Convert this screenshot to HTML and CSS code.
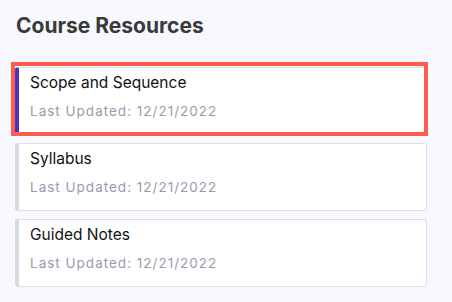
FILE: index.html
```html
<!DOCTYPE html>
<html lang="en">
<head>
<meta charset="utf-8">
<title>Course Resources</title>
<link rel="stylesheet" href="styles.css">
</head>
<body>
<main class="panel">
  <h1 class="panel-title">Course Resources</h1>
  <ul class="resource-list">
    <li class="resource-card is-selected">
      <div class="resource-name">Scope and Sequence</div>
      <div class="resource-date">Last Updated: 12/21/2022</div>
    </li>
    <li class="resource-card">
      <div class="resource-name">Syllabus</div>
      <div class="resource-date">Last Updated: 12/21/2022</div>
    </li>
    <li class="resource-card">
      <div class="resource-name">Guided Notes</div>
      <div class="resource-date">Last Updated: 12/21/2022</div>
    </li>
  </ul>
</main>
</body>
</html>
```
FILE: styles.css
```css
html, body {
  margin: 0;
  padding: 0;
  background: #f8f9fe;
  font-family: Inter, "Noto Sans", "Liberation Sans", sans-serif;
}

.panel {
  padding: 13px 25px 0 15px;
}

.panel-title {
  margin: 0 0 0 1px;
  font-size: 21px;
  line-height: 26px;
  font-weight: 700;
  color: #3a3a3c;
}

.resource-list {
  list-style: none;
  margin: 28px 0 0 0;
  padding: 0;
  width: 412px;
  display: flex;
  flex-direction: column;
  gap: 8px;
}

.resource-card {
  position: relative;
  box-sizing: border-box;
  height: 68px;
  background: #ffffff;
  border: 1px solid #dddde5;
  border-left: 4px solid #d9d9e1;
  border-radius: 3px;
  padding: 5px 11px 0 11px;
}

.resource-card.is-selected {
  border-left-color: #4a33c4;
}

.resource-card.is-selected::after {
  content: "";
  position: absolute;
  left: -8px;
  top: -6px;
  width: 417px;
  height: 74px;
  box-sizing: border-box;
  border: 4px solid #ff5b4e;
  pointer-events: none;
}

.resource-name {
  font-size: 15.5px;
  line-height: 20px;
  color: #111114;
}

.resource-date {
  margin-top: 9px;
  font-size: 13.5px;
  line-height: 18px;
  letter-spacing: 1px;
  color: #9c99ad;
}
```
